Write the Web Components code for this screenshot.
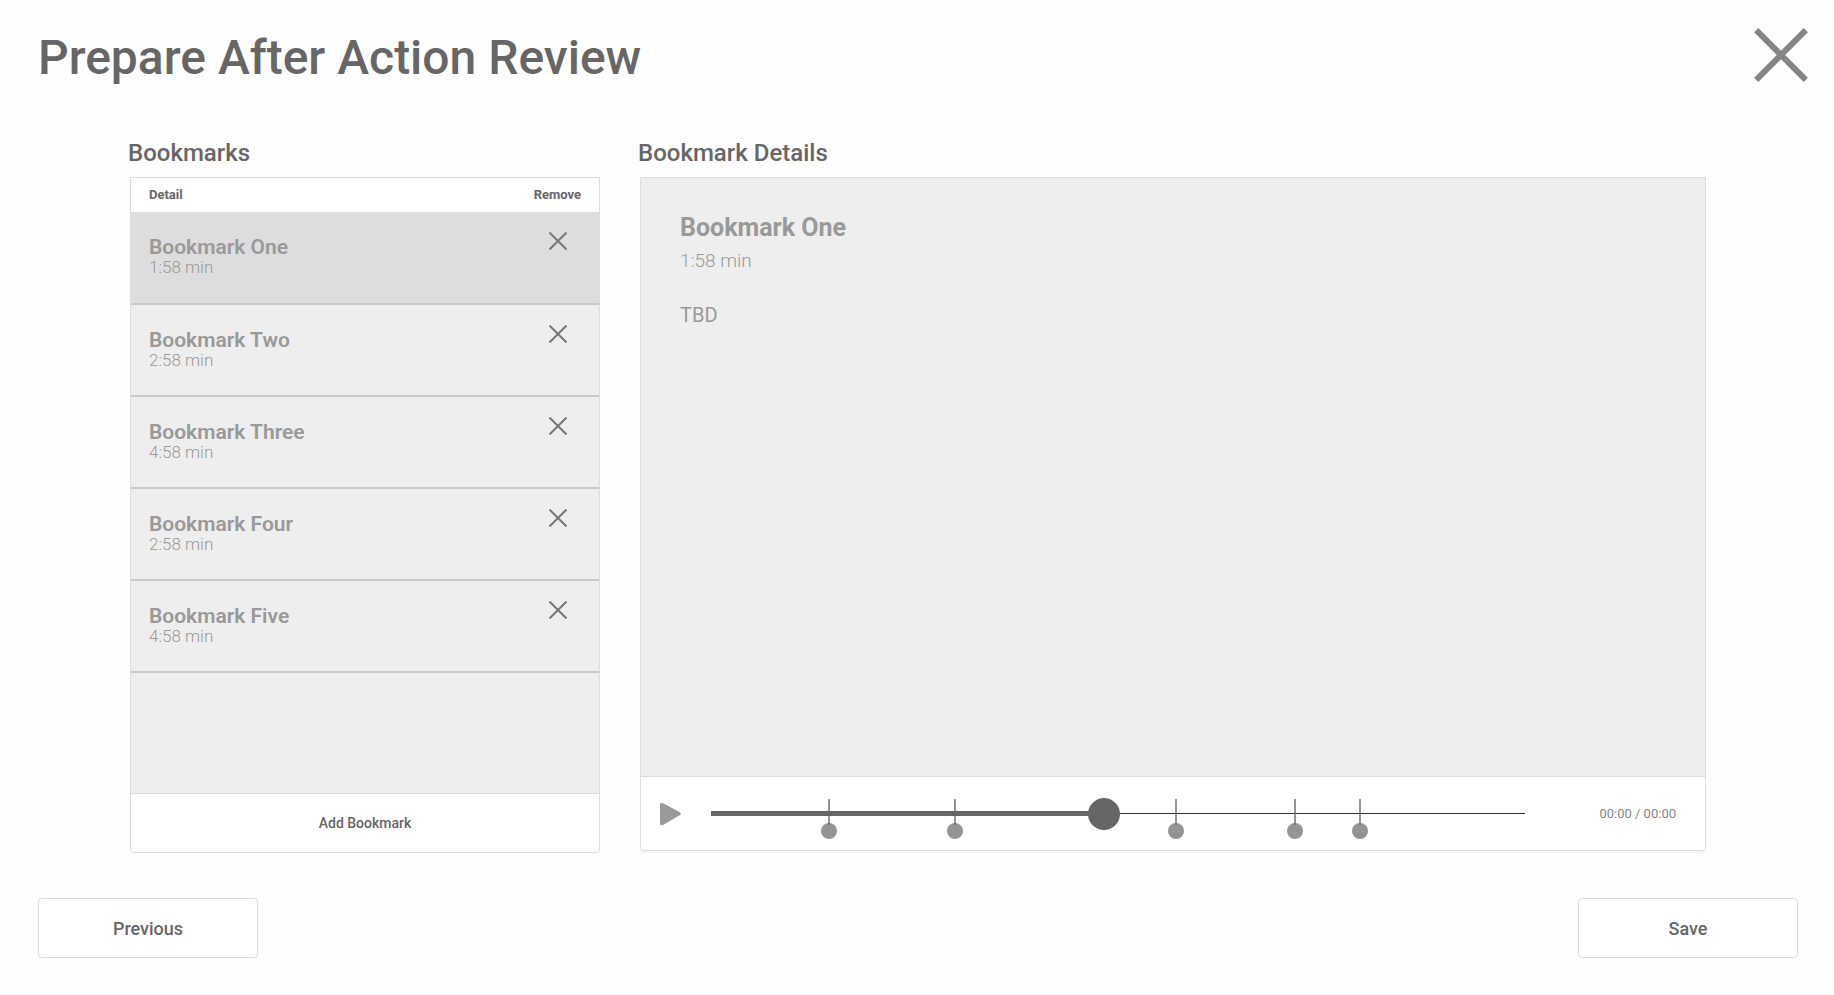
<!DOCTYPE html>
<html lang="en">
<head>
<meta charset="utf-8">
<meta name="viewport" content="width=device-width, initial-scale=1">
<title>Prepare After Action Review</title>
<style>
  :root {
    --ink: #666;
    --muted: #999;
    --line: #dcdcdc;
    --surface: #eee;
    --paper: #fefefe;
  }
  body {
    margin: 0;
    background: var(--paper);
    color: var(--ink);
    font-family: Roboto, "Liberation Sans", sans-serif;
  }
</style>
</head>
<body>
<review-page></review-page>

<script>
const bookmarks = [
  { title: 'Bookmark One', time: '1:58 min', note: 'TBD', at: 14.5 },
  { title: 'Bookmark Two', time: '2:58 min', note: 'TBD', at: 30 },
  { title: 'Bookmark Three', time: '4:58 min', note: 'TBD', at: 57.1 },
  { title: 'Bookmark Four', time: '2:58 min', note: 'TBD', at: 71.7 },
  { title: 'Bookmark Five', time: '4:58 min', note: 'TBD', at: 79.7 }
];

class BaseElement extends HTMLElement {
  connectedCallback() {
    if (this.shadowRoot) return;
    this.attachShadow({ mode: 'open' }).innerHTML =
      '<style>* { box-sizing: border-box; } button { font: inherit; color: inherit; cursor: pointer; }</style>' + this.render();
  }
}

class CloseButton extends BaseElement {
  render() {
    return `
      <style>
        :host { display: block; }
        button { display: block; padding: 0; border: 0; background: none; color: #858585; }
        svg { display: block; width: 54px; height: 54px; }
      </style>
      <button type="button" aria-label="Close">
        <svg viewBox="0 0 54 54" fill="none" stroke="currentColor" stroke-width="6" aria-hidden="true"><path d="M2.2 2.2 51.8 51.8M51.8 2.2 2.2 51.8"/></svg>
      </button>`;
  }
}

class OutlineButton extends BaseElement {
  render() {
    return `
      <style>
        :host { display: block; width: 220px; }
        button {
          width: 100%; height: 60px; padding: 0;
          border: 1px solid var(--line); border-radius: 4px; background: #fff;
          font-size: 18px; font-weight: 500;
        }
      </style>
      <button type="button"><slot></slot></button>`;
  }
}

class TitledPanel extends BaseElement {
  render() {
    return `
      <style>
        :host { display: flex; flex-direction: column; min-width: 0; }
        h2 { margin: 0 0 10px -2px; font-size: 24px; line-height: 28px; font-weight: 500; }
        .box {
          flex: 1; display: flex; flex-direction: column;
          border: 1px solid var(--line); border-radius: 0 0 4px 4px;
          background: var(--surface); overflow: hidden;
        }
        :host([raised]) .box { margin-bottom: 2px; box-shadow: 0 2px 0 #f6f6f6; }
      </style>
      <h2>${this.getAttribute('heading')}</h2>
      <div class="box"><slot></slot></div>`;
  }
}

class BookmarkList extends BaseElement {
  render() {
    return `
      <style>
        :host { flex: 1; display: flex; flex-direction: column; }
        table { width: 100%; border-collapse: collapse; }
        th {
          height: 34px; padding: 0 18px; background: #fff;
          font-size: 13px; line-height: 16px; font-weight: 700; text-align: left;
        }
        th:last-child { text-align: right; }
        td { height: 92px; padding: 0 18px; border-bottom: 2px solid #c9c9c9; vertical-align: top; }
        tr[aria-selected="true"] td { background: #ddd; }
        .title { padding-top: 24px; color: var(--muted); font-size: 21px; line-height: 22px; font-weight: 600; }
        .time { color: var(--muted); font-size: 17px; line-height: 18px; font-weight: 300; }
        td:last-child { padding: 12px 24px 0; }
        .remove { display: block; margin-left: auto; padding: 8px; border: 0; background: none; color: #777; }
        svg { display: block; width: 18px; height: 18px; }
        .add {
          height: 59px; margin-top: auto; padding: 0;
          border: 0; border-top: 1px solid var(--line); background: #fff;
          font-size: 14px; font-weight: 500;
        }
      </style>
      <table>
        <thead><tr><th scope="col">Detail</th><th scope="col">Remove</th></tr></thead>
        <tbody>
          ${bookmarks.map((b, i) => `
          <tr aria-selected="${i === 0}">
            <td><div class="title">${b.title}</div><div class="time">${b.time}</div></td>
            <td><button class="remove" type="button" aria-label="Remove ${b.title}">
              <svg viewBox="0 0 18 18" fill="none" stroke="currentColor" stroke-width="2" aria-hidden="true"><path d="M.5.5 17.5 17.5M17.5.5.5 17.5"/></svg>
            </button></td>
          </tr>`).join('')}
        </tbody>
      </table>
      <button class="add" type="button">Add Bookmark</button>`;
  }
}

class BookmarkDetails extends BaseElement {
  render() {
    const b = bookmarks[0];
    return `
      <style>
        :host { flex: 1; display: block; padding: 36px 39px; color: var(--muted); }
        h3 { margin: 0; font-size: 25px; line-height: 28px; font-weight: 700; }
        p { margin: 0; font-size: 20px; line-height: 24px; }
        .time { margin: 7px 0 30px; font-size: 19px; font-weight: 300; }
      </style>
      <h3>${b.title}</h3>
      <p class="time">${b.time}</p>
      <p>${b.note}</p>`;
  }
}

class ReviewPlayer extends BaseElement {
  render() {
    return `
      <style>
        :host {
          display: flex; align-items: center; height: 74px; padding: 0 29px 0 19px;
          border-top: 1px solid var(--line); background: #fff;
        }
        .play { flex: none; padding: 0; border: 0; background: none; color: var(--muted); }
        .play svg { display: block; width: 21px; height: 22px; }
        .track { flex: 1; position: relative; height: 32px; margin: 0 74px 0 30px; }
        input {
          display: block; width: 100%; height: 32px; margin: 0;
          appearance: none; -webkit-appearance: none; cursor: pointer;
          background:
            linear-gradient(#666, #666) 0 50% / 48.2% 5px no-repeat,
            linear-gradient(#333, #333) 0 50% / 100% 1px no-repeat;
        }
        input::-webkit-slider-thumb {
          appearance: none; -webkit-appearance: none;
          width: 32px; height: 32px; border: 0; border-radius: 50%; background: #666;
        }
        .mark {
          position: absolute; left: var(--at); top: 1px; width: 16px; height: 40px;
          transform: translateX(-50%); pointer-events: none;
        }
        output { flex: none; color: #858585; font-size: 13px; line-height: 16px; white-space: nowrap; }
      </style>
      <button class="play" type="button" aria-label="Play">
        <svg viewBox="0 0 21 22" fill="currentColor" aria-hidden="true"><path d="M0 1Q0 0 1 0H2.5L20 9.3Q21.6 10.7 20 12L3 22H1Q0 22 0 21Z"/></svg>
      </button>
      <div class="track">
        <input type="range" min="0" max="1000" value="482" aria-label="Position">
        ${bookmarks.map(b => `<svg class="mark" style="--at:${b.at}%" viewBox="0 0 16 40" fill="#666" aria-hidden="true"><path opacity=".7" d="M7 0H9V26H7Z"/><circle opacity=".7" cx="8" cy="32" r="8"/></svg>`).join('')}
      </div>
      <output>00:00 / 00:00</output>`;
  }
}

class ReviewPage extends BaseElement {
  render() {
    return `
      <style>
        :host { display: flex; flex-direction: column; min-height: 100vh; box-sizing: border-box; padding: 28px 36px 37px 38px; }
        header { display: flex; justify-content: space-between; align-items: flex-start; margin-right: -10px; }
        h1 { margin: 0; font-size: 48px; line-height: 60px; font-weight: 500; }
        main {
          flex: 1; display: grid; gap: 40px; padding: 51px 92px 0 92px;
          grid-template-columns: minmax(0, 470fr) minmax(0, 1066fr);
        }
        footer { display: flex; justify-content: space-between; margin-top: 45px; }
      </style>
      <header><h1>Prepare After Action Review</h1><close-button></close-button></header>
      <main>
        <titled-panel heading="Bookmarks"><bookmark-list></bookmark-list></titled-panel>
        <titled-panel heading="Bookmark Details" raised><bookmark-details></bookmark-details><review-player></review-player></titled-panel>
      </main>
      <footer><outline-button>Previous</outline-button><outline-button>Save</outline-button></footer>`;
  }
}

customElements.define('close-button', CloseButton);
customElements.define('outline-button', OutlineButton);
customElements.define('titled-panel', TitledPanel);
customElements.define('bookmark-list', BookmarkList);
customElements.define('bookmark-details', BookmarkDetails);
customElements.define('review-player', ReviewPlayer);
customElements.define('review-page', ReviewPage);
</script>
</body>
</html>
